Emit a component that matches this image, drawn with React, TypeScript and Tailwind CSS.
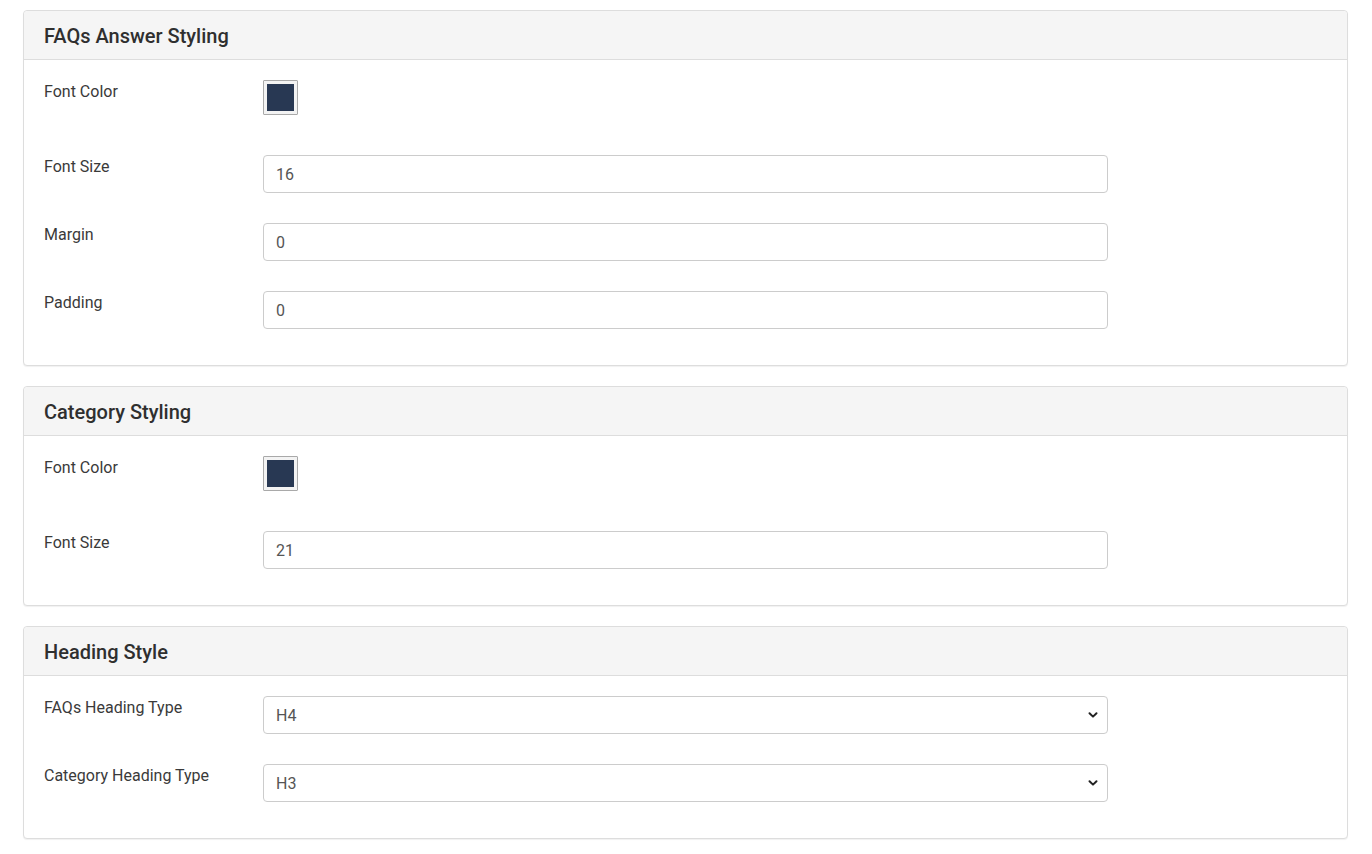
import React from "react";

function Chevron() {
  return (
    <svg width="10" height="8" viewBox="0 0 10 8" className="absolute right-[9px] top-1/2 -translate-y-1/2 pointer-events-none">
      <path d="M1.5 2.2 L5 5.6 L8.5 2.2" fill="none" stroke="#222" strokeWidth="2" strokeLinecap="round" strokeLinejoin="round" />
    </svg>
  );
}

function Panel({ title, children }: { title: string; children: React.ReactNode }) {
  return (
    <div className="bg-white border border-[#dddddd] rounded-[4px] shadow-[0_1px_1px_rgba(0,0,0,0.06)]">
      <div className="bg-[#f5f5f5] border-b border-[#dddddd] rounded-t-[4px] h-[49px] px-[20px] flex items-center">
        <h3 className="text-[20px] font-medium text-[#2f2f2f] leading-none pt-[1px]">{title}</h3>
      </div>
      <div className="px-[20px] pt-[20px] pb-[36px] flex flex-col gap-[30px]">{children}</div>
    </div>
  );
}

function Row({ label, children }: { label: string; children: React.ReactNode }) {
  return (
    <div className="flex items-start">
      <label className="w-[219px] shrink-0 text-[16px] leading-[22px] text-[#3a3a3a] pt-[1px]">{label}</label>
      {children}
    </div>
  );
}

function ColorRow({ label }: { label: string }) {
  return (
    <div className="flex items-start h-[45px]">
      <label className="w-[219px] shrink-0 text-[16px] leading-[22px] text-[#3a3a3a] pt-[1px]">{label}</label>
      <div className="w-[35px] h-[35px] border border-[#a9a9a9] bg-[#f3f3f3] p-[3px] rounded-[1px]">
        <div className="w-full h-full bg-[#283853]" />
      </div>
    </div>
  );
}

function TextInput({ value }: { value: string }) {
  return (
    <div className="w-[845px] h-[38px] border border-[#cccccc] rounded-[4px] bg-white flex items-center px-[12px] pt-[1px] text-[16px] text-[#555]">
      {value}
    </div>
  );
}

function SelectInput({ value }: { value: string }) {
  return (
    <div className="relative w-[845px] h-[38px] border border-[#cccccc] rounded-[4px] bg-white flex items-center px-[12px] pt-[1px] text-[16px] text-[#555]">
      {value}
      <Chevron />
    </div>
  );
}

export default function App() {
  return (
    <div className="min-h-[854px] bg-white pl-[23px] pr-[24px] pt-[10px] pb-[16px] flex flex-col gap-[20px] w-[1372px]" style={{ fontFamily: "Roboto, 'Liberation Sans', sans-serif" }}>
      <Panel title="FAQs Answer Styling">
        <ColorRow label="Font Color" />
        <Row label="Font Size"><TextInput value="16" /></Row>
        <Row label="Margin"><TextInput value="0" /></Row>
        <Row label="Padding"><TextInput value="0" /></Row>
      </Panel>
      <Panel title="Category Styling">
        <ColorRow label="Font Color" />
        <Row label="Font Size"><TextInput value="21" /></Row>
      </Panel>
      <Panel title="Heading Style">
        <Row label="FAQs Heading Type"><SelectInput value="H4" /></Row>
        <Row label="Category Heading Type"><SelectInput value="H3" /></Row>
      </Panel>
    </div>
  );
}
